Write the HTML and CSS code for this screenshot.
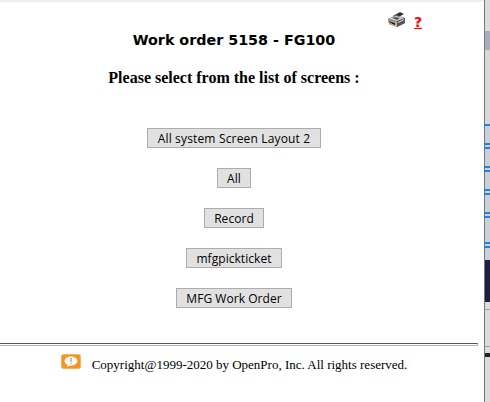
FILE: index.html
```html
<!DOCTYPE html>
<html lang="en">
<head>
  <meta charset="UTF-8">
  <title>Work order 5158</title>
  <link rel="stylesheet" href="styles.css">
</head>
<body>
  <div class="page">
    <div class="main">
      <div class="tools">
        <svg class="printer" width="20" height="17" viewBox="0 0 20 17">
          <path d="M6 5 L13 1 L17 3 L10 7 Z" fill="#333"/>
          <path d="M1 8 L9 4 L18 7 L18 12 L10 16 L2 13 Z" fill="#777"/>
          <path d="M2 8 L9 5 L17 7 L10 10 Z" fill="#d8d8d8"/>
          <path d="M5 7 L9 6 L13 7 L10 9 Z" fill="#555"/>
          <path d="M10 10 L18 7 L18 12 L10 16 Z" fill="#555"/>
          <path d="M1 9 L10 11 L10 16 L2 13 Z" fill="#b4b4b4"/>
          <path d="M2 10 L8 12 L8 14 L3 12 Z" fill="#1c1c1c"/>
          <path d="M2 11 L5 12 L5 13.5 L2 12.5 Z" fill="#e8791c"/>
          <path d="M11 11 L17 8 L17 9 L11 12 Z" fill="#e4e4e4"/>
        </svg>
        <a class="help" href="#">?</a>
      </div>
      <h1>Work order 5158 - FG100</h1>
      <h2>Please select from the list of screens :</h2>
      <div class="screens">
        <button type="button" class="wide">All system Screen Layout 2</button>
        <button type="button">All</button>
        <button type="button">Record</button>
        <button type="button">mfgpickticket</button>
        <button type="button">MFG Work Order</button>
      </div>
      <hr>
      <div class="footer">
        <svg class="badge" width="20" height="15" viewBox="0 0 20 15">
          <rect x="0.5" y="0.5" width="19" height="14" rx="2" fill="#f7931e" stroke="#f2b16e"/>
          <ellipse cx="10" cy="7" rx="6.5" ry="4.5" fill="#fff"/>
          <path d="M7 10 L6 13 L10 11 Z" fill="#fff"/>
          <rect x="9.5" y="4" width="1" height="4" fill="#c8701a"/>
          <rect x="9.5" y="9" width="1" height="1" fill="#c8701a"/>
        </svg>
        <span>Copyright@1999-2020 by OpenPro, Inc. All rights reserved.</span>
      </div>
    </div>
    <div class="strip"></div>
  </div>
</body>
</html>
```

FILE: styles.css
```css
html, body {
  margin: 0;
  height: 100%;
  background-color: #ffffff;
  overflow: hidden;
}

.page {
  display: flex;
  justify-content: space-between;
  height: 402px;
  border-top: 2px solid #eeeeee;
  box-sizing: border-box;
}

.main {
  width: 468px;
}

.tools {
  display: flex;
  align-items: flex-start;
  height: 28px;
  padding: 9px 0 0 387px;
  box-sizing: border-box;
}

.printer {
  display: block;
}

.help {
  margin: 3px 0 0 7px;
  color: #ff0000;
  font-family: "DejaVu Sans", sans-serif;
  font-size: 14px;
  font-weight: bold;
  line-height: 16px;
}

h1 {
  margin: 2px 0 0;
  color: #000;
  font-family: "DejaVu Sans", sans-serif;
  font-size: 14.3px;
  font-weight: bold;
  line-height: 16px;
  text-align: center;
}

h2 {
  margin: 21px 0 0;
  color: #000;
  font-family: "Liberation Serif", serif;
  font-size: 16px;
  font-weight: bold;
  line-height: 18px;
  text-align: center;
}

.screens {
  display: flex;
  flex-direction: column;
  align-items: center;
  gap: 20px;
  margin-top: 41px;
}

button {
  height: 20px;
  padding: 0 9px;
  background-color: #e1e1e1;
  border: 1px solid #adadad;
  border-radius: 0;
  color: #000;
  font-family: "Open Sans", sans-serif;
  font-size: 12px;
  letter-spacing: 0.05px;
}

.wide {
  padding: 0 10px;
  letter-spacing: 0.16px;
}

hr {
  width: 478px;
  height: 3px;
  margin: 35px 0 0;
  box-sizing: border-box;
  border: 0;
  border-top: 1px solid #555555;
  border-bottom: 1px solid #b5b5b5;
  border-right: 1px solid #b5b5b5;
}

.footer {
  display: flex;
  justify-content: center;
  align-items: flex-start;
  margin-top: 8px;
  color: #000;
  font-family: "Liberation Serif", serif;
  font-size: 13px;
}

.badge {
  display: block;
  margin-right: 11px;
}

.footer span {
  margin-top: 3px;
}

.strip {
  width: 6px;
  margin-top: -2px;
  background:
    linear-gradient(to bottom,
      transparent 0 124px,
      #2a7fd8 124px 126px,
      transparent 126px 143px,
      #2a7fd8 143px 145px,
      transparent 145px 147px,
      #2a7fd8 147px 149px,
      transparent 149px 166px,
      #2a7fd8 166px 168px,
      transparent 168px 170px,
      #2a7fd8 170px 172px,
      transparent 172px 189px,
      #2a7fd8 189px 191px,
      transparent 191px 193px,
      #2a7fd8 193px 195px,
      transparent 195px 212px,
      #2a7fd8 212px 214px,
      transparent 214px 216px,
      #2a7fd8 216px 218px,
      transparent 218px 242px,
      #2a7fd8 242px 244px,
      transparent 244px 246px,
      #2a7fd8 246px 248px,
      transparent 248px 402px),
    linear-gradient(#777777, #777777) left top / 1px 100% no-repeat,
    linear-gradient(to bottom,
      #dcdcdc 0 31px,
      #a8adbd 31px 50px,
      #d8d8d8 50px 124px,
      #c8d2da 124px 260px,
      #1c2045 260px 302px,
      #dcdcdc 302px 309px,
      #a5a5a5 309px 310px,
      #dcdcdc 310px 346px,
      #a5a5a5 346px 347px,
      #dcdcdc 347px 353px,
      #222222 353px 357px,
      #dcdcdc 357px 402px);
}
```
